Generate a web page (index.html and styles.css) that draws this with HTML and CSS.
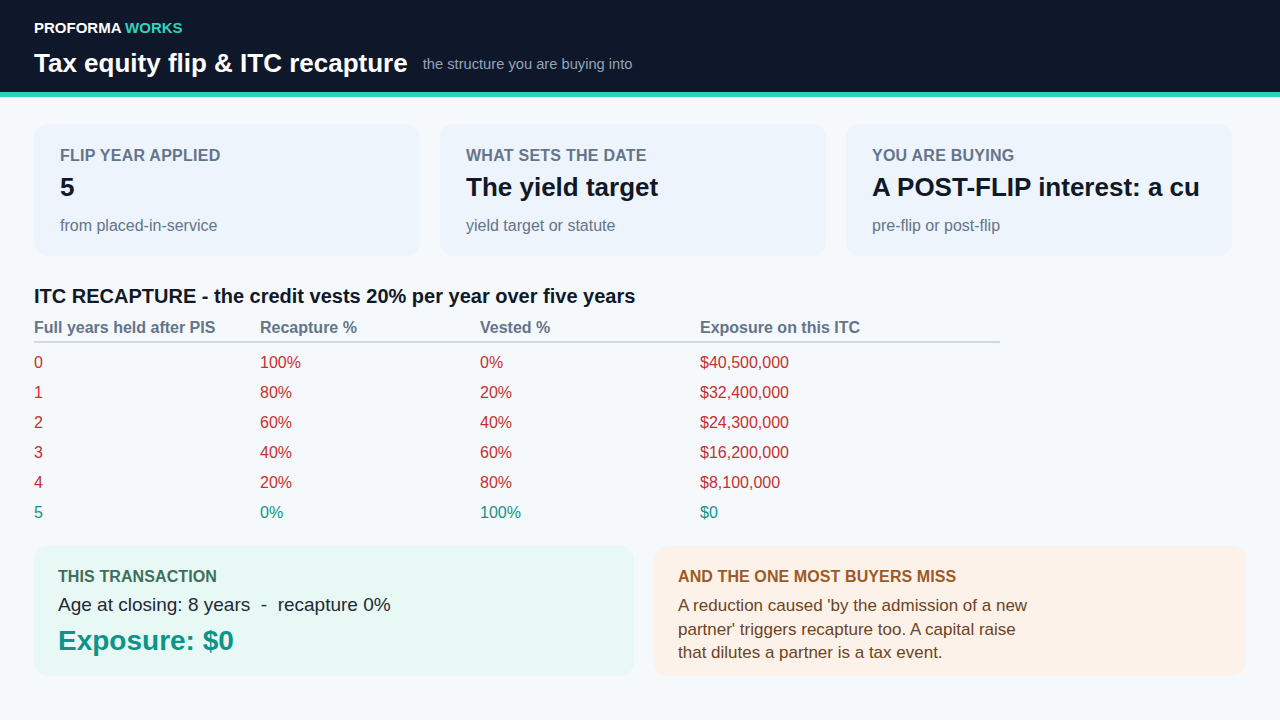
FILE: index.html
```html
<!DOCTYPE html>
<html lang="en">
<head>
<meta charset="utf-8">
<title>Tax equity flip &amp; ITC recapture</title>
<link rel="stylesheet" href="styles.css">
</head>
<body>
<header class="top">
  <div class="brand">PROFORMA <span class="brand-accent">WORKS</span></div>
  <div class="title-row">
    <h1 class="title">Tax equity flip &amp; ITC recapture</h1>
    <span class="subtitle">the structure you are buying into</span>
  </div>
</header>
<main class="main">
  <section class="cards">
    <div class="card">
      <div class="card-label">FLIP YEAR APPLIED</div>
      <div class="card-value">5</div>
      <div class="card-sub">from placed-in-service</div>
    </div>
    <div class="card">
      <div class="card-label">WHAT SETS THE DATE</div>
      <div class="card-value">The yield target</div>
      <div class="card-sub">yield target or statute</div>
    </div>
    <div class="card">
      <div class="card-label">YOU ARE BUYING</div>
      <div class="card-value">A POST-FLIP interest: a cu</div>
      <div class="card-sub">pre-flip or post-flip</div>
    </div>
  </section>

  <h2 class="section-title">ITC RECAPTURE - the credit vests 20% per year over five years</h2>
  <table class="recap">
    <colgroup>
      <col class="c1"><col class="c2"><col class="c3"><col class="c4">
    </colgroup>
    <thead>
      <tr><th>Full years held after PIS</th><th>Recapture %</th><th>Vested %</th><th>Exposure on this ITC</th></tr>
    </thead>
    <tbody>
      <tr class="bad"><td>0</td><td>100%</td><td>0%</td><td>$40,500,000</td></tr>
      <tr class="bad"><td>1</td><td>80%</td><td>20%</td><td>$32,400,000</td></tr>
      <tr class="bad"><td>2</td><td>60%</td><td>40%</td><td>$24,300,000</td></tr>
      <tr class="bad"><td>3</td><td>40%</td><td>60%</td><td>$16,200,000</td></tr>
      <tr class="bad"><td>4</td><td>20%</td><td>80%</td><td>$8,100,000</td></tr>
      <tr class="good"><td>5</td><td>0%</td><td>100%</td><td>$0</td></tr>
    </tbody>
  </table>

  <section class="bottom">
    <div class="panel panel-green">
      <div class="panel-label">THIS TRANSACTION</div>
      <div class="panel-line">Age at closing: 8 years &nbsp;-&nbsp; recapture 0%</div>
      <div class="panel-big">Exposure: $0</div>
    </div>
    <div class="panel panel-orange">
      <div class="panel-label">AND THE ONE MOST BUYERS MISS</div>
      <p class="panel-text">A reduction caused 'by the admission of a new partner' triggers recapture too. A capital raise that dilutes a partner is a tax event.</p>
    </div>
  </section>
</main>
</body>
</html>
```

FILE: styles.css
```css
* { box-sizing: border-box; }

html, body {
  margin: 0;
  padding: 0;
}

body {
  background: #f5f9fc;
  font-family: "Liberation Sans", Arial, sans-serif;
  color: #111827;
  width: 1280px;
  height: 720px;
  overflow: hidden;
}

.top {
  background: #0f172a;
  padding: 18px 34px 14px;
  border-bottom: 5px solid #2dd4bf;
}

.brand {
  font-size: 15px;
  line-height: 20px;
  font-weight: 700;
  color: #ffffff;
}

.brand-accent { color: #2dd4bf; }

.title-row {
  margin-top: 10px;
  display: flex;
  align-items: center;
  gap: 15px;
}

.title {
  margin: 0;
  font-size: 26px;
  line-height: 30px;
  font-weight: 700;
  color: #ffffff;
}

.subtitle {
  font-size: 14.7px;
  line-height: 20px;
  margin-top: 2px;
  color: #94a3b8;
}

.main {
  padding: 27px 34px 0;
}

.cards {
  display: grid;
  grid-template-columns: 386px 386px 386px;
  gap: 20px;
}

.card {
  background: #edf4fc;
  border-radius: 14px;
  padding: 22px 26px 20px;
  overflow: hidden;
}

.card-label {
  font-size: 16px;
  line-height: 20px;
  font-weight: 700;
  letter-spacing: 0.25px;
  color: #64748b;
}

.card-value {
  margin-top: 5px;
  font-size: 26px;
  line-height: 32px;
  font-weight: 700;
  color: #111827;
  white-space: nowrap;
  overflow: hidden;
}

.card-sub {
  margin-top: 13px;
  font-size: 16px;
  line-height: 20px;
  color: #64748b;
}

.section-title {
  margin: 28px 0 8px;
  font-size: 20px;
  line-height: 24px;
  font-weight: 700;
  color: #111827;
}

.recap {
  border-collapse: collapse;
  table-layout: fixed;
  width: 966px;
}

.recap .c1 { width: 226px; }
.recap .c2 { width: 220px; }
.recap .c3 { width: 220px; }
.recap .c4 { width: 300px; }

.recap th {
  text-align: left;
  font-size: 16px;
  line-height: 20px;
  font-weight: 700;
  color: #64748b;
  padding: 2px 0 3px;
  border-bottom: 2px solid #cfd8e6;
}

.recap td {
  font-size: 16px;
  line-height: 20px;
  padding: 10px 0 0;
}

.recap .bad td { color: #c53030; }
.recap .good td { color: #0d9488; }

.bottom {
  margin-top: 23px;
  display: grid;
  grid-template-columns: 600px 592px;
  gap: 20px;
}

.panel {
  border-radius: 14px;
  padding: 21px 24px 20px;
  height: 130px;
}

.panel-green { background: #e8f8f4; }
.panel-orange { background: #fdf2ea; }

.panel-label {
  font-size: 16px;
  line-height: 20px;
  font-weight: 700;
  letter-spacing: 0.1px;
}

.panel-green .panel-label { color: #3f6e5c; }
.panel-orange .panel-label { color: #9c5a26; }

.panel-line {
  margin-top: 6px;
  font-size: 19px;
  line-height: 24px;
  color: #1f2937;
}

.panel-big {
  margin-top: 7px;
  font-size: 28px;
  line-height: 34px;
  font-weight: 700;
  color: #0d9488;
}

.panel-text {
  margin: 7px 0 0;
  max-width: 370px;
  font-size: 17px;
  line-height: 23.5px;
  color: #6b4423;
}
```
